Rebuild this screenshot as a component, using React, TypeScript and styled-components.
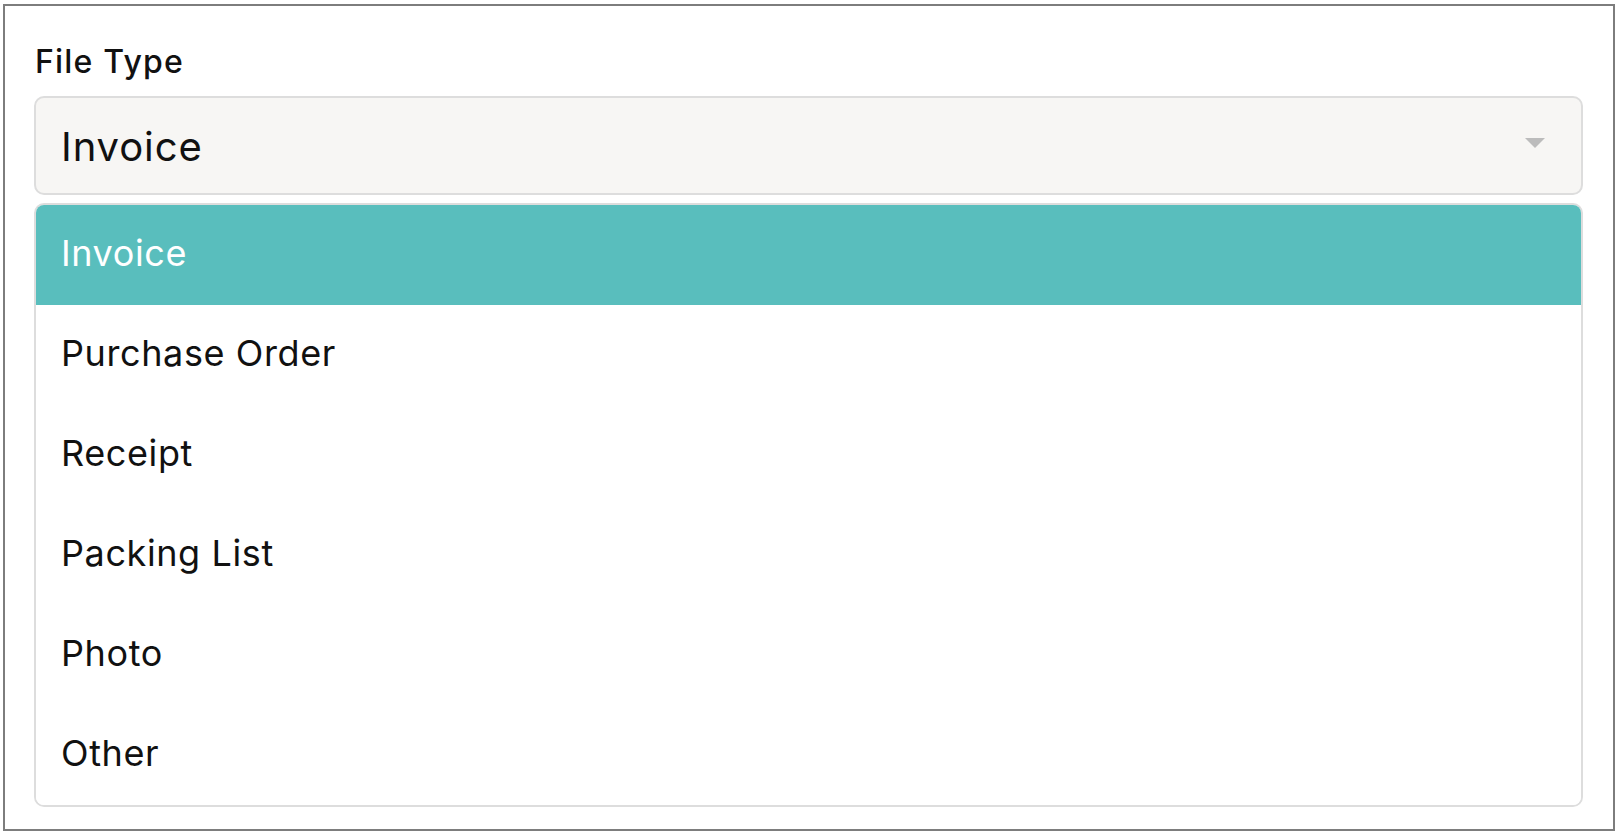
import React from "react";
import styled, { createGlobalStyle } from "styled-components";

const GlobalStyle = createGlobalStyle`
  * { box-sizing: border-box; }
  html, body { margin: 0; padding: 0; background: #ffffff; }
  body {
    font-family: "Inter", "Noto Sans", sans-serif;
    color: #111111;
    -webkit-font-smoothing: antialiased;
  }
`;

const Frame = styled.div`
  margin: 4px 3px 3px 3px;
  height: 827px;
  border: 2px solid #7d7d7d;
  padding: 40px 30px 0 29px;
  display: flex;
  flex-direction: column;
  background: #ffffff;
`;

const Label = styled.label`
  display: block;
  padding-left: 1px;
  font-size: 32px;
  font-weight: 500;
  letter-spacing: 1.2px;
  line-height: 32px;
  color: #111111;
  margin-bottom: 18px;
`;

const SelectBox = styled.div`
  height: 99px;
  border: 2px solid #dddddd;
  border-radius: 10px;
  background: #f7f6f4;
  display: flex;
  align-items: center;
  justify-content: space-between;
  padding: 3px 36px 0 25px;
`;

const SelectValue = styled.span`
  font-size: 40px;
  letter-spacing: 0.9px;
  line-height: 92px;
  color: #111111;
`;

const Caret = styled.svg`
  width: 20px;
  height: 10px;
  margin-bottom: 8px;
  display: block;
`;

const Menu = styled.ul`
  list-style: none;
  margin: 8px 0 0 0;
  padding: 0;
  border: 2px solid #dddddd;
  border-radius: 10px;
  overflow: hidden;
  background: #ffffff;
`;

const Option = styled.li<{ $active?: boolean }>`
  height: 100px;
  padding: 0 25px 4px 25px;
  font-size: 36px;
  letter-spacing: 0.6px;
  line-height: 96px;
  background: ${(p) => (p.$active ? "#59bebd" : "#ffffff")};
  color: ${(p) => (p.$active ? "#ffffff" : "#111111")};
  white-space: nowrap;
`;

const options = ["Invoice", "Purchase Order", "Receipt", "Packing List", "Photo", "Other"];

export default function App() {
  const selected = "Invoice";
  return (
    <>
      <GlobalStyle />
      <Frame>
        <Label>File Type</Label>
        <SelectBox>
          <SelectValue>{selected}</SelectValue>
          <Caret viewBox="0 0 20 10">
            <polygon points="0,0 20,0 10,10" fill="#bcbcbc" />
          </Caret>
        </SelectBox>
        <Menu>
          {options.map((o) => (
            <Option key={o} $active={o === selected}>
              {o}
            </Option>
          ))}
        </Menu>
      </Frame>
    </>
  );
}
